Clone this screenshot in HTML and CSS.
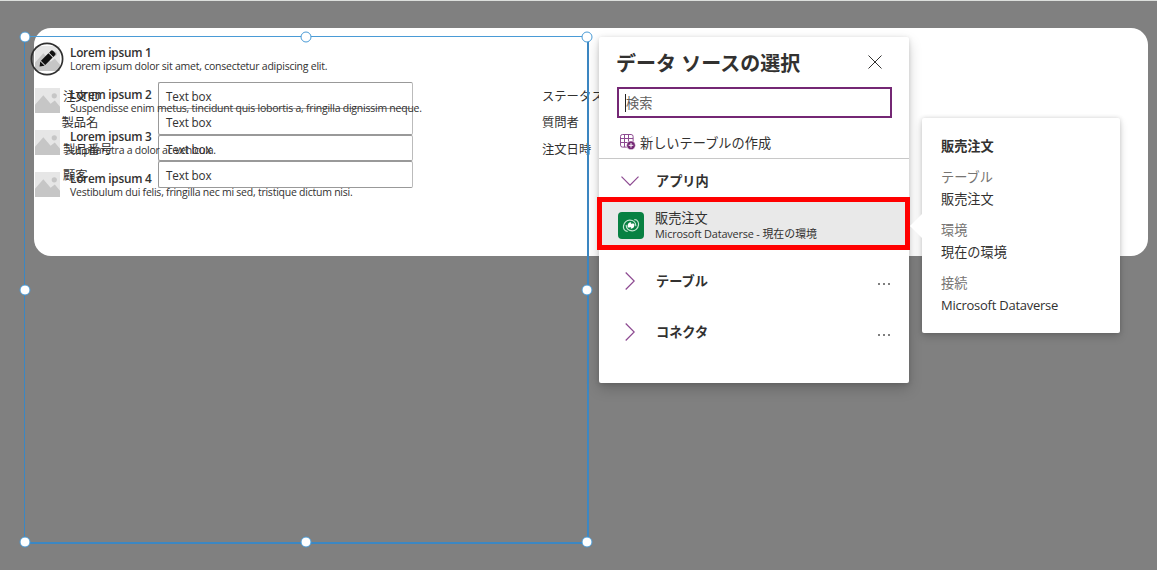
FILE: index.html
```
<!DOCTYPE html>
<html lang="ja">
<head>
<meta charset="utf-8">
<title>データ ソースの選択</title>
<link rel="stylesheet" href="styles.css">
</head>
<body>
<svg class="defs" aria-hidden="true">
  <symbol id="picture" viewBox="0 0 24 24"><path fill="#e6e6e6" d="M0 0h24v24H0z"/><path fill="#c6c6c6" d="M0 16 8 7l7 8 4-3 5 6v6H0z"/><circle cx="18.5" cy="7.5" r="2.5" fill="#c6c6c6"/></symbol>
  <symbol id="chevron" viewBox="0 0 10 18"><path d="m.7.5 8.5 8.5-8.5 8.5" fill="none" stroke="#8d4a91" stroke-width="1.2"/></symbol>
</svg>
<main class="canvas">
  <section class="form-card">
    <div class="fields">
      <label class="label">注文ID</label><div class="textbox">Text box</div><span class="label">ステータス</span>
      <label class="label label-name">製品名</label><div class="textbox">Text box</div><span class="label">質問者</span>
      <label class="label">製品番号</label><div class="textbox">Text box</div><span class="label">注文日時</span>
      <label class="label">顧客</label><div class="textbox">Text box</div>
    </div>
  </section>

  <section class="gallery">
    <article class="item"><svg class="thumb"><use href="#picture"/></svg><div><h3>Lorem ipsum 1</h3><p>Lorem ipsum dolor sit amet, consectetur adipiscing elit.</p></div></article>
    <article class="item"><svg class="thumb"><use href="#picture"/></svg><div><h3>Lorem ipsum 2</h3><p>Suspendisse enim metus, tincidunt quis lobortis a, fringilla dignissim neque.</p></div></article>
    <article class="item"><svg class="thumb"><use href="#picture"/></svg><div><h3>Lorem ipsum 3</h3><p>Ut pharetra a dolor ac vehicula.</p></div></article>
    <article class="item"><svg class="thumb"><use href="#picture"/></svg><div><h3>Lorem ipsum 4</h3><p>Vestibulum dui felis, fringilla nec mi sed, tristique dictum nisi.</p></div></article>
    <svg class="edit" viewBox="0 0 34 34"><circle cx="17" cy="17" r="15.6" fill="none" stroke="#303030" stroke-width="1.7"/><g transform="translate(17 17) rotate(-45)"><path fill="#111" d="m-10.5 0 4-3v6zM-5.5-3H5v6H-5.5zM6-3h2.5q1.5 0 1.5 1.5v3Q10 3 8.5 3H6z"/></g></svg>
    <i class="handle tl"></i><i class="handle tc"></i><i class="handle tr"></i><i class="handle ml"></i><i class="handle mr"></i><i class="handle bl"></i><i class="handle bc"></i><i class="handle br"></i>
  </section>

  <section class="panel">
    <header class="panel-head"><h1>データ ソースの選択</h1><svg class="close" viewBox="0 0 14 14"><path d="m.5.5 13 13m0-13-13 13" stroke="#323130" stroke-width="1"/></svg></header>
    <div class="search"><i class="caret"></i>検索</div>
    <div class="create">
      <svg class="table-icon" viewBox="0 0 16 16"><g fill="none" stroke="#8d4a91"><rect x=".5" y=".5" width="12.6" height="12.6" rx="2"/><path d="M.5 4.5h12.6M.5 8.5h12.6M4.5.5v12.6M8.5.5v12.6"/></g><circle cx="11" cy="11.3" r="4.4" fill="#742774" stroke="#fff" stroke-width=".6"/><path d="M11 9v4.6m-2.3-2.3h4.6" stroke="#fff"/></svg>
      <span>新しいテーブルの作成</span>
    </div>
    <div class="group open"><svg class="chevron down"><use href="#chevron"/></svg><b>アプリ内</b></div>
    <div class="source">
      <svg class="dataverse" viewBox="0 0 26 27"><rect width="26" height="27" rx="4" fill="#088142"/><g transform="translate(13 13.5)"><g id="swirl"><path fill="none" stroke="#c4e6d2" stroke-width="1.2" stroke-linecap="round" d="M-3.8 5.8C-6.6 5.8-7.9 3-7.5.3-7-3.2-4-5.4-1.2-5.3 2.3-5.2 4.8-3 4.8.2"/></g><use href="#swirl" transform="rotate(180)"/><path fill="#fff" d="M-3.4 1.2c-.4-2.7 1.5-4.8 3.9-4.4-.8.5-.8 1.1-.2 1.5C2-2.2 3.3-2.3 3.4-1.2 3.8 1.5 1.9 3.6-.5 3.2.3 2.7.3 2.1-.3 1.7-2 2.2-3.3 2.3-3.4 1.2z"/></g></svg>
      <div><div class="source-name">販売注文</div><div class="source-sub"><span>Microsoft Dataverse -</span> 現在の環境</div></div>
    </div>
    <div class="group"><svg class="chevron"><use href="#chevron"/></svg><b>テーブル</b><span class="more"><i></i><i></i><i></i></span></div>
    <div class="group"><svg class="chevron"><use href="#chevron"/></svg><b>コネクタ</b><span class="more"><i></i><i></i><i></i></span></div>
    <div class="highlight"></div>
  </section>

  <aside class="callout">
    <svg class="beak" viewBox="0 0 13 26"><path d="M13 0 0 13l13 13z" fill="#fff"/></svg>
    <h2>販売注文</h2>
    <dl><dt>テーブル</dt><dd>販売注文</dd><dt>環境</dt><dd>現在の環境</dd><dt>接続</dt><dd class="latin">Microsoft Dataverse</dd></dl>
  </aside>
</main>
</body>
</html>
```
FILE: styles.css
```
* { box-sizing: border-box; }
body { margin: 0; }
h1, h2, h3, p, dl, dd { margin: 0; }
.defs { position: absolute; width: 0; height: 0; }
.canvas {
  position: relative; width: 1157px; height: 570px; overflow: hidden;
  background: #808080; border-top: 1px solid #dcdfdc; color: #323130;
  font: 13.2px/20px "Open Sans", "Noto Sans CJK JP", sans-serif;
}
.form-card {
  position: absolute; left: 33.5px; top: 27px; width: 1114px; height: 227.5px;
  background: #fff; border-radius: 17px; padding: 54px 0 0 29.5px;
}
.fields { display: grid; grid-template-columns: 95px 384px 100px; grid-auto-rows: 26.4px; }
.label { padding-top: 5px; font-size: 12.3px; line-height: 20px; white-space: nowrap; }
.label-name { margin-left: -1.5px; }
.textbox {
  width: 255px; height: 26.5px; padding-left: 7px; line-height: 27px; font-size: 11.7px; letter-spacing: -.15px;
  border: 1px solid #999; border-right-color: #bbb; border-radius: 2px;
}
.gallery {
  position: absolute; left: 24px; top: 35px; width: 565px; height: 508px;
  border: 2px solid #3c87c2; border-left-width: 1px; border-top: 1px solid #4a9bd6; padding: 9px 0 0 10px;
}
.item { display: grid; grid-template-columns: 35px 1fr; height: 42.1px; white-space: nowrap; }
.thumb { width: 25px; height: 25px; }
.item h3 { margin-top: -1px; font-size: 11.8px; line-height: 14px; font-weight: 600; letter-spacing: -.25px; }
.item p { font-size: 10.5px; line-height: 15px; letter-spacing: -.24px; }
.edit { position: absolute; left: 5px; top: 5px; width: 34px; height: 34px; }
.handle {
  position: absolute; width: 11px; height: 11px; border-radius: 50%;
  background: #fff; border: 1.5px solid #4a9bd6; transform: translate(-50%, -50%);
}
.tl, .tc, .tr { top: 0; }
.ml, .mr { top: 50%; }
.bl, .bc, .br { top: 100%; }
.tl, .ml, .bl { left: 0; }
.tc, .bc { left: 50%; }
.tr, .mr, .br { left: 100%; }

.panel {
  position: absolute; left: 599px; top: 36px; width: 310px; height: 346px;
  background: #fff; border-radius: 2px; box-shadow: 0 6px 14px rgba(0,0,0,.18), 0 1px 5px rgba(0,0,0,.14);
}
.panel-head { display: flex; justify-content: space-between; padding: 12px 27.5px 0 17px; height: 50px; }
.panel-head h1 { font-size: 20px; line-height: 30px; font-weight: 700; white-space: nowrap; }
.close { width: 14px; height: 14px; margin-top: 6px; }
.search { display: flex; align-items: center; width: 275px; height: 31px; margin-left: 18px; padding-left: 6px; border: 2px solid #742774; color: #605e5c; }
.caret { width: 1px; height: 18px; background: #222; }
.create { display: flex; align-items: center; gap: 4px; height: 41px; padding: 9px 0 0 21px; border-bottom: 1px solid #c8c8c8; }
.table-icon { width: 16px; height: 16px; margin-top: -1px; }
.group { display: flex; align-items: center; height: 50.5px; padding: 0 19px 0 26px; }
.group.open { height: 43px; padding-top: 1px; }
.group b { margin-left: 21px; }
.chevron { width: 10px; height: 18px; }
.down { transform: rotate(90deg); }
.more { display: flex; gap: 3px; margin: 6px 0 0 auto; }
.more i { width: 2px; height: 2px; background: #555; border-radius: 1px; }
.source { display: flex; gap: 11px; height: 48px; padding: 10px 0 0 19px; margin-bottom: 6px; background: #e9e9e9; }
.dataverse { width: 26px; height: 27px; }
.source-name { margin-top: -2px; line-height: 17px; }
.source-sub { font-size: 10.9px; line-height: 14px; }
.source-sub span { letter-spacing: -.18px; }
.highlight { position: absolute; left: -2px; top: 160px; width: 313px; height: 53px; border: 5px solid #f00; }

.callout {
  position: absolute; left: 922px; top: 117px; width: 198px; height: 215px; padding: 18px 19px;
  background: #fff; border-radius: 2px; box-shadow: 0 4px 9px rgba(0,0,0,.16), 0 0 4px rgba(0,0,0,.15);
}
.beak { position: absolute; left: -12px; top: 95px; width: 13px; height: 26px; }
.callout h2 { font-size: 13.2px; line-height: 20px; }
.callout dt { color: #767472; line-height: 20px; margin-top: 8px; }
.callout dt:first-child { margin-top: 10px; }
.callout h2 + dl { padding-top: 1px; }
.callout dd { line-height: 25px; }
.callout .latin { font-size: 13px; letter-spacing: -.25px; }
```
